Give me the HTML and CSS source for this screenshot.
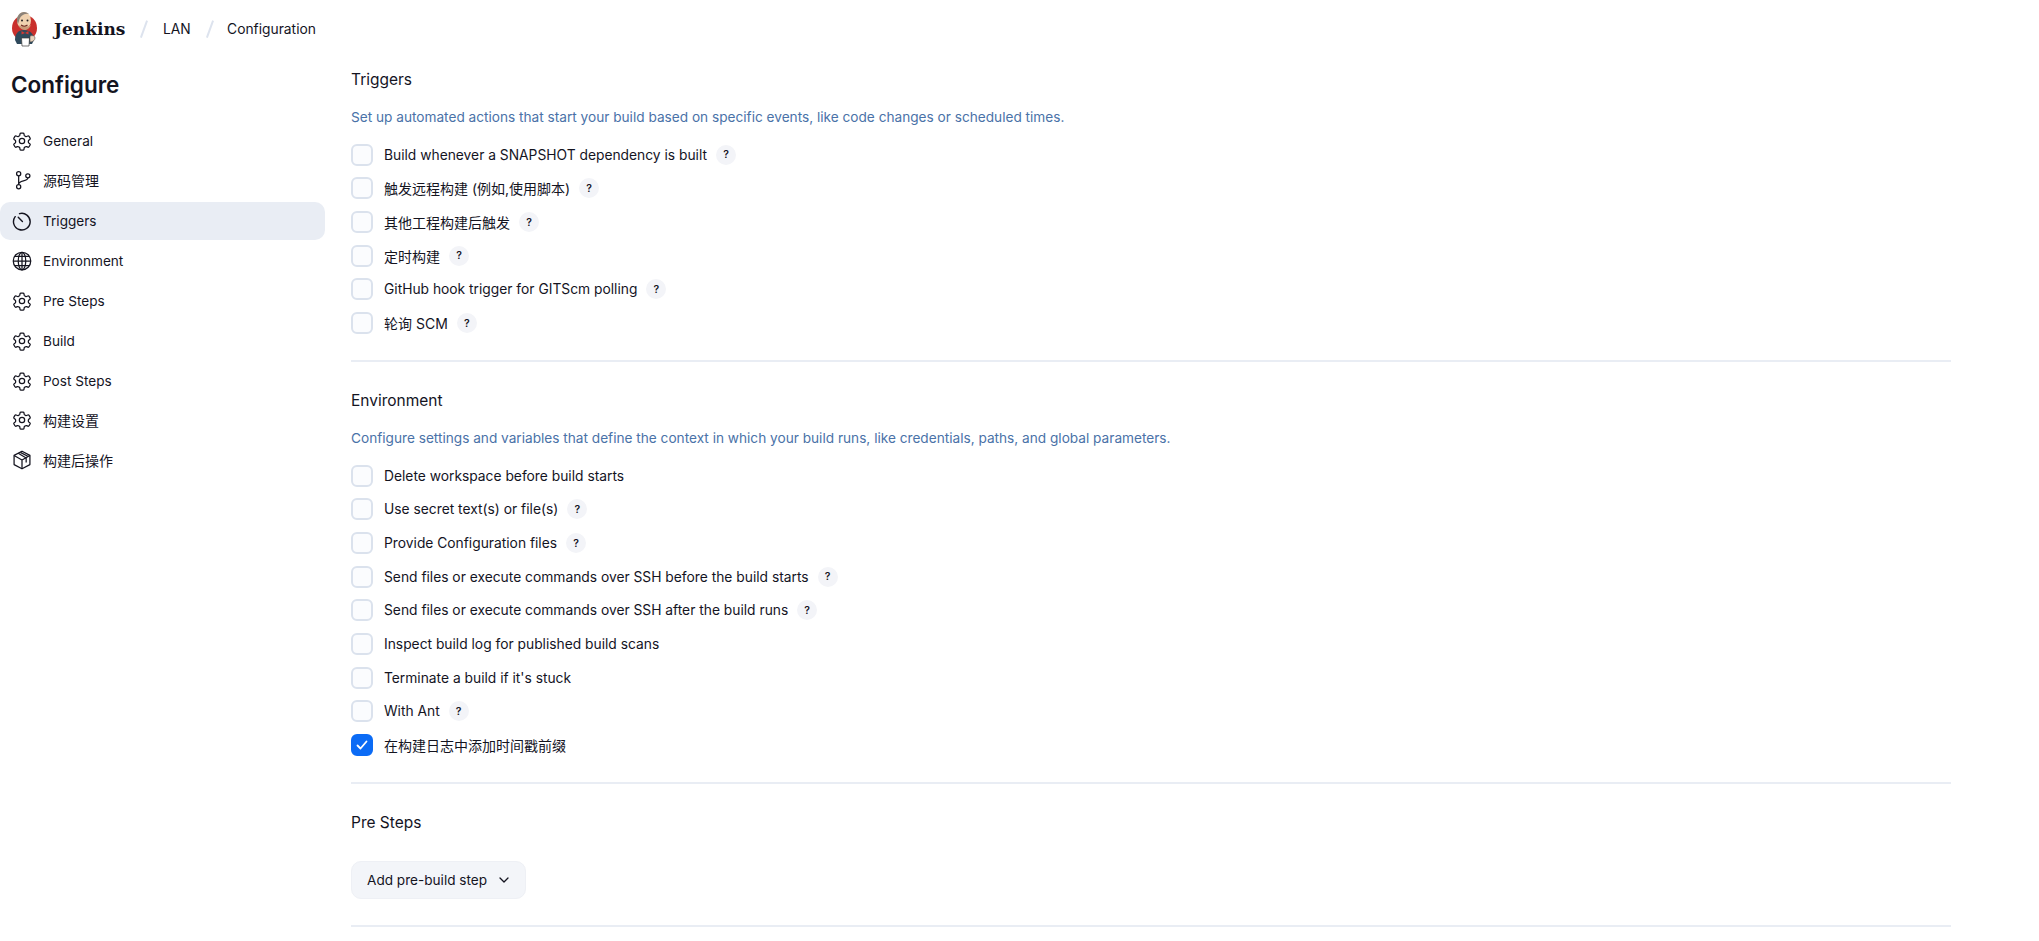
FILE: index.html
```html
<!DOCTYPE html>
<html lang="en">
<head>
    <meta charset="UTF-8">
    <title>LAN Config - Jenkins</title>
    <link rel="stylesheet" href="styles.css">
</head>
<body>
    <svg class="svg-defs" width="0" height="0">
        <defs>
            <symbol id="icon-gear" viewBox="0 0 24 24">
                <path d="M9.600 3.400c.1-.6.6-1 1.200-1h2.400c.6 0 1.100.4 1.200 1l.2 1.600c.1.4.4.8.8 1l.9.5c.4.2.8.2 1.200.1l1.500-.6c.6-.2 1.200 0 1.500.5l1.200 2.100c.3.500.2 1.200-.3 1.500l-1.300 1c-.3.300-.5.700-.5 1.100v1c0 .4.200.8.500 1.100l1.300 1c.5.300.6 1 .3 1.500l-1.200 2.100c-.3.500-.9.700-1.500.5l-1.500-.6c-.4-.1-.8-.1-1.200.1l-.9.500c-.4.200-.7.600-.8 1l-.2 1.600c-.1.600-.6 1-1.200 1h-2.400c-.6 0-1.100-.4-1.200-1l-.2-1.600c-.1-.4-.4-.8-.8-1l-.9-.5c-.4-.2-.8-.2-1.200-.1l-1.500.6c-.6.200-1.200 0-1.500-.5l-1.200-2.100c-.3-.5-.2-1.200.3-1.500l1.300-1c.3-.3.5-.7.5-1.100v-1c0-.4-.2-.8-.5-1.100l-1.300-1c-.5-.3-.6-1-.3-1.500l1.200-2.100c.3-.5.9-.7 1.500-.5l1.500.6c.4.1.8.1 1.200-.1l.9-.5c.4-.2.7-.6.8-1z" fill="none" stroke="currentColor" stroke-width="1.500" stroke-linejoin="round"/>
                <circle cx="12" cy="12" r="3.200" fill="none" stroke="currentColor" stroke-width="1.500"/>
            </symbol>
        </defs>
    </svg>

    <header class="topbar">
        <svg class="logo" viewBox="0 0 28 36" width="28" height="36" aria-hidden="true">
            <ellipse cx="13.500" cy="17" rx="12.500" ry="13" fill="#c9302c"/>
            <path d="M4 29c0-6 3-10 9-10s10 4 10 10l-2 4H6z" fill="#2f4a5c"/>
            <ellipse cx="13" cy="9.500" rx="7" ry="8.500" fill="#f0d2b0"/>
            <path d="M6 10c-.5-5 3-9 7-9 2 0 4 1 5 2-5-1-9 2-10 7l-1 3z" fill="#8c8278"/>
            <path d="M7 14c2 4 5 5.500 8 5 2-.5 4-2.500 5-5-3 2-9 2.500-13 0z" fill="#c99a78"/>
            <circle cx="11" cy="9.500" r="1" fill="#231f20"/>
            <circle cx="16.500" cy="9.500" r="1" fill="#231f20"/>
            <path d="M10 14c2 1.500 4.500 1.500 6.500 0" fill="none" stroke="#6d2a20" stroke-width="1.100"/>
            <path d="M10.500 20l3.500 2 3.500-2v3.500l-3.500-1.500-3.500 1.500z" fill="#d33833"/>
            <path d="M10.500 27h8l-.5 8h-7z" fill="#fff" stroke="#3a3a3a" stroke-width=".7"/>
            <path d="M19 25c3-1 5 0 5 2s-2 4-5 4z" fill="#ead3bd" stroke="#3a3a3a" stroke-width=".5"/>
        </svg>
        <span class="brand">Jenkins</span>
        <span class="crumb-sep"></span>
        <span class="crumb">LAN</span>
        <span class="crumb-sep crumb-sep-last"></span>
        <span class="crumb">Configuration</span>
    </header>

    <div class="layout">
        <aside class="sidebar">
            <h1 class="page-title">Configure</h1>
            <nav class="side-nav">
                <a class="nav-item"><svg class="nav-icon"><use href="#icon-gear"/></svg>General</a>
                <a class="nav-item nav-item-cjk">
                    <svg class="nav-icon" viewBox="0 0 24 24" fill="none" stroke="currentColor" stroke-width="1.500">
                        <circle cx="8" cy="4.500" r="2.500"/><circle cx="8" cy="20" r="2.500"/><circle cx="19" cy="7" r="2.500"/>
                        <path d="M8 7v10.500M8 17c0-5 11-3 11-7.500"/>
                    </svg>源码管理</a>
                <a class="nav-item nav-item-active">
                    <svg class="nav-icon" viewBox="0 0 24 24" fill="none" stroke="currentColor" stroke-width="1.700" stroke-linecap="round">
                        <path d="M9 3.200A10 10 0 1 1 3.800 6.800"/><path d="M7.500 7.500l5 5"/>
                    </svg>Triggers</a>
                <a class="nav-item">
                    <svg class="nav-icon" viewBox="0 0 24 24" fill="none" stroke="currentColor" stroke-width="1.500">
                        <circle cx="12" cy="12" r="10.500"/><ellipse cx="12" cy="12" rx="4.500" ry="10.500"/>
                        <path d="M12 1.500v21M1.500 12h21M3.500 6.500h17M3.500 17.500h17"/>
                    </svg>Environment</a>
                <a class="nav-item"><svg class="nav-icon"><use href="#icon-gear"/></svg>Pre Steps</a>
                <a class="nav-item"><svg class="nav-icon"><use href="#icon-gear"/></svg>Build</a>
                <a class="nav-item"><svg class="nav-icon"><use href="#icon-gear"/></svg>Post Steps</a>
                <a class="nav-item nav-item-cjk"><svg class="nav-icon"><use href="#icon-gear"/></svg>构建设置</a>
                <a class="nav-item nav-item-cjk">
                    <svg class="nav-icon" viewBox="0 0 24 24" fill="none" stroke="currentColor" stroke-width="1.500" stroke-linejoin="round">
                        <path d="M12 1.500l9.500 5v11L12 22.500 2.500 17.500v-11z"/>
                        <path d="M2.500 6.500l9.500 5.500 9.500-5.500M12 12v10.500M7.500 4l9.500 5.500v5.500M10 2.800l9.500 5"/>
                    </svg>构建后操作</a>
            </nav>
        </aside>

        <main class="content">
            <section class="section">
                <h2 class="section-title">Triggers</h2>
                <p class="section-desc">Set up automated actions that start your build based on specific events, like code changes or scheduled times.</p>
                <div class="check-row"><span class="box"></span><span>Build whenever a SNAPSHOT dependency is built</span><span class="help">?</span></div>
                <div class="check-row check-row-cjk"><span class="box"></span><span>触发远程构建 (例如,使用脚本)</span><span class="help">?</span></div>
                <div class="check-row check-row-cjk"><span class="box"></span><span>其他工程构建后触发</span><span class="help">?</span></div>
                <div class="check-row check-row-cjk"><span class="box"></span><span>定时构建</span><span class="help">?</span></div>
                <div class="check-row"><span class="box"></span><span>GitHub hook trigger for GITScm polling</span><span class="help">?</span></div>
                <div class="check-row check-row-cjk"><span class="box"></span><span>轮询 SCM</span><span class="help">?</span></div>
            </section>

            <section class="section">
                <h2 class="section-title">Environment</h2>
                <p class="section-desc">Configure settings and variables that define the context in which your build runs, like credentials, paths, and global parameters.</p>
                <div class="check-row"><span class="box"></span><span>Delete workspace before build starts</span></div>
                <div class="check-row"><span class="box"></span><span>Use secret text(s) or file(s)</span><span class="help">?</span></div>
                <div class="check-row"><span class="box"></span><span>Provide Configuration files</span><span class="help">?</span></div>
                <div class="check-row"><span class="box"></span><span>Send files or execute commands over SSH before the build starts</span><span class="help">?</span></div>
                <div class="check-row"><span class="box"></span><span>Send files or execute commands over SSH after the build runs</span><span class="help">?</span></div>
                <div class="check-row"><span class="box"></span><span>Inspect build log for published build scans</span></div>
                <div class="check-row"><span class="box"></span><span>Terminate a build if it's stuck</span></div>
                <div class="check-row"><span class="box"></span><span>With Ant</span><span class="help">?</span></div>
                <div class="check-row check-row-cjk">
                    <span class="box box-checked">
                        <svg viewBox="0 0 14 14" width="14" height="14" fill="none" stroke="#fff" stroke-width="1.800" stroke-linecap="round" stroke-linejoin="round"><path d="M2.500 7.500l3 3 6-7"/></svg>
                    </span>
                    <span>在构建日志中添加时间戳前缀</span>
                </div>
            </section>

            <section class="section section-steps">
                <h2 class="section-title section-title-steps">Pre Steps</h2>
                <button class="add-button">Add pre-build step
                    <svg viewBox="0 0 12 12" width="12" height="12" fill="none" stroke="currentColor" stroke-width="1.300" stroke-linecap="round" stroke-linejoin="round"><path d="M2 4l4 4 4-4"/></svg>
                </button>
            </section>
        </main>
    </div>
</body>
</html>
```

FILE: styles.css
```css
html, body {
    height: 100%;
    overflow: hidden;
}

body {
    margin: 0;
    background: #fff;
    color: #14141f;
    font-family: Inter, "Noto Sans CJK SC", sans-serif;
    font-size: 13.800px;
}

.svg-defs {
    display: block;
    height: 0;
}

.topbar {
    display: flex;
    align-items: center;
    height: 57px;
    padding-left: 11px;
}

.logo {
    margin-right: 15px;
}

.brand {
    font-family: "DejaVu Serif", serif;
    font-weight: 700;
    font-size: 17px;
}

.crumb {
    font-size: 13.800px;
}

.crumb-sep {
    width: 1.500px;
    height: 18px;
    margin: 0 18px;
    background: #dde3ee;
    transform: rotate(20deg);
}

.crumb-sep-last {
    margin-right: 17px;
}

.layout {
    display: flex;
}

.sidebar {
    width: 325px;
    flex: none;
}

.page-title {
    margin: 10px 0 19px 11px;
    font-size: 22.500px;
    line-height: 36px;
    font-weight: 600;
}

.side-nav {
    display: flex;
    flex-direction: column;
    font-size: 13.600px;
}

.nav-item {
    display: flex;
    align-items: center;
    gap: 11px;
    height: 38px;
    margin-bottom: 2px;
    padding-left: 12px;
    border-radius: 10px;
}

.nav-item-cjk {
    box-sizing: border-box;
    padding-bottom: 3px;
    font-size: 14px;
}

.check-row-cjk {
    font-size: 14px;
}

.nav-item-active {
    background: #e9edf4;
}

.nav-icon {
    width: 20px;
    height: 20px;
    flex: none;
}

.content {
    width: 1600px;
    margin-left: 26px;
    padding-top: 11px;
}

.section {
    border-bottom: 2px solid #e9edf4;
    margin-bottom: 27px;
    padding-bottom: 20px;
}

.section-steps {
    padding-bottom: 26px;
}

.section-title {
    margin: 0;
    font-size: 15.500px;
    line-height: 24px;
    font-weight: 400;
}

.section-desc {
    margin: 13px 0 9px;
    font-size: 13.650px;
    line-height: 24px;
    color: #4a72a8;
}

.section-title-steps {
    margin-bottom: 26px;
}

.check-row {
    display: flex;
    align-items: center;
    height: 33.670px;
}

.box {
    display: flex;
    align-items: center;
    justify-content: center;
    width: 22px;
    height: 22px;
    box-sizing: border-box;
    margin-right: 11px;
    border: 2px solid #dbe2ed;
    border-radius: 6px;
    background: #fbfcfe;
}

.box-checked {
    background: #0b6bf5;
    border-color: #0b6bf5;
}

.help {
    display: flex;
    align-items: center;
    justify-content: center;
    width: 20px;
    height: 20px;
    margin-left: 9px;
    border-radius: 50%;
    background: #f3f4f8;
    font-size: 10.500px;
    font-weight: 600;
}

.add-button {
    display: flex;
    align-items: center;
    gap: 11px;
    height: 38px;
    padding: 0 15px;
    border: 1px solid #eef0f5;
    border-radius: 10px;
    background: #f3f5f9;
    color: inherit;
    font: inherit;
    font-size: 13.600px;
    font-weight: 400;
}
```
